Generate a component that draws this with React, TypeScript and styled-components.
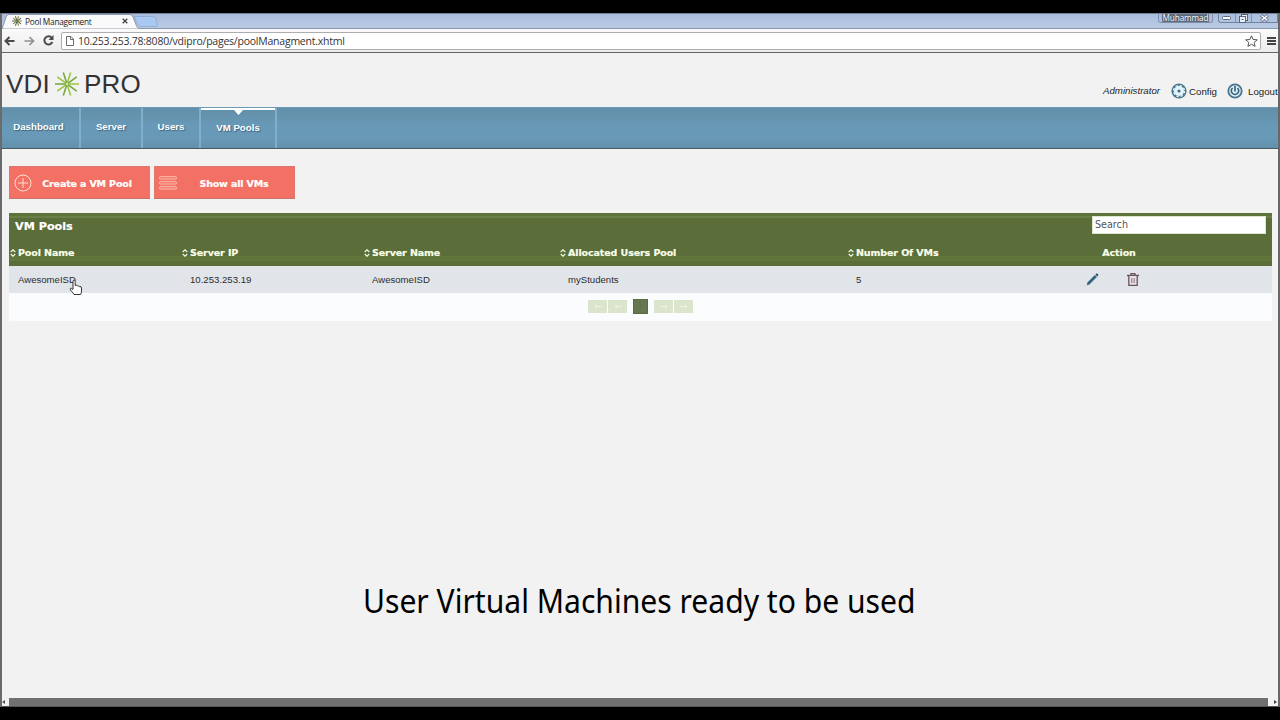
import React from 'react';
import styled, { createGlobalStyle, css } from 'styled-components';

const Global = createGlobalStyle`
  *{box-sizing:border-box}
  html,body{margin:0;padding:0;background:#000;overflow:hidden}
  body{font-family:"Liberation Sans",Arial,sans-serif}
  svg{display:block;flex:none}
`;

const Screen = styled.div`
  width:1280px;height:720px;padding:13px 0;background:#000;
`;
const Window = styled.div`
  height:694px;border-left:2px solid #6b6b6e;border-right:2px solid #68686b;
  background:#f2f2f2;display:flex;flex-direction:column;
`;
const TabStrip = styled.div`
  height:16px;flex:none;display:flex;align-items:flex-start;border-top:1px solid #73809a;
  border-bottom:1px solid #8b97ac;background:linear-gradient(#a9bddb,#bacbe4);
`;
const TabShapes = styled.div`
  width:158px;height:15px;position:relative;
`;
const TabArt = styled.svg`
  position:absolute;left:0;top:0;
`;
const TabLabel = styled.div`
  position:relative;display:flex;align-items:center;height:14px;padding-left:10px;
  font:8.3px "Open Sans",sans-serif;color:#222;white-space:nowrap;
`;
const TabText = styled.span`
  margin-left:3px;width:97px;letter-spacing:-0.27px;
`;
const Spacer = styled.div`flex:1;`;
const UserBadge = styled.div`
  height:9px;width:55px;margin-right:5px;border:1px solid #7f90ad;border-top:0;border-radius:0 0 3px 3px;
  display:flex;justify-content:center;align-items:center;
`;
const UserName = styled.span`
  font:8.2px/8px "Open Sans",sans-serif;color:#fff;background:#66738a;padding:0 1px;height:8px;
  text-shadow:0 0 2px #222;letter-spacing:-.1px;
`;
const WindowButtons = styled.div`
  height:9px;width:60px;display:flex;border:1px solid #7383a0;border-top:0;border-radius:0 0 0 3px;
`;
const WindowButton = styled.div<{ $w: number }>`
  width:${p => p.$w}px;display:flex;justify-content:center;align-items:center;
  & + &{border-left:1px solid #8292af}
`;

const Toolbar = styled.div`
  height:24px;flex:none;display:flex;align-items:center;background:linear-gradient(#fafafa,#ececec);
  border-bottom:1px solid #666;padding-left:2px;
`;
const NavIcon = styled.div<{ $w: number }>`
  width:${p => p.$w}px;flex:none;display:flex;
`;
const Omnibox = styled.div`
  width:1200px;height:18px;flex:none;border:1px solid #adadad;border-radius:2px;background:#fff;
  display:flex;align-items:center;padding:0 2px 0 4px;
`;
const Address = styled.span`
  margin-left:4px;flex:1;font:10.5px/16px "Open Sans",sans-serif;color:#333;letter-spacing:-0.23px;
`;
const Menu = styled.div`
  width:9px;flex:none;margin-left:6px;display:flex;flex-direction:column;gap:1px;
`;
const MenuBar = styled.i`height:2px;background:#444;`;

const Header = styled.header`
  height:54px;flex:none;display:flex;align-items:flex-start;justify-content:space-between;
`;
const Logo = styled.div`
  display:flex;align-items:center;gap:5px;padding:15px 0 0 4px;height:46px;color:#333;
`;
const LogoText = styled.span<{ $s?: number }>`
  font:26px/30px "Liberation Sans",Arial,sans-serif;letter-spacing:${p => p.$s || 0}px;
`;
const Account = styled.div`
  display:flex;align-items:center;padding-top:28px;height:48px;width:175px;
  font-size:9.7px;color:#222;white-space:nowrap;
`;
const AccountText = styled.span<{ $w: number; $italic?: boolean }>`
  width:${p => p.$w}px;flex:none;
  ${p => p.$italic && css`font-style:italic;padding-bottom:1px;`}
`;
const AccountIcon = styled.div<{ $gap: number }>`margin-right:${p => p.$gap}px;`;

const Nav = styled.nav`
  height:42px;flex:none;display:flex;background:linear-gradient(#628fa9,#6899b7 45%,#6899b7 75%,#6291ab);
  border-top:1px solid #6b9bb6;border-bottom:1px solid #4b5a64;
`;
const NavItem = styled.div<{ $w: number; $active?: boolean; $shift?: number }>`
  position:relative;width:${p => p.$w}px;border-right:2px solid #7fb0cb;display:flex;justify-content:center;
  padding-top:${p => (p.$active ? 13 : 12)}px;padding-right:${p => p.$shift || 0}px;
  font:bold 9.7px/14px "Liberation Sans",Arial,sans-serif;color:#fff;text-shadow:1px 1px 1px #3c6279;
`;
const ActiveMark = styled.svg`
  position:absolute;left:0;top:0;
`;

const Content = styled.main`
  flex:1;min-height:0;padding:17px 6px 0 7px;display:flex;flex-direction:column;
`;
const Actions = styled.div`display:flex;gap:4px;height:33px;`;
const ActionButton = styled.div`
  width:141px;height:33px;border:1px solid #dc786e;border-bottom-color:#c4756b;background:#f37164;
  display:flex;align-items:center;padding-left:4px;
`;
const ActionLabel = styled.span<{ $pad: number }>`
  flex:1;text-align:center;padding:2px ${p => p.$pad}px 0 0;font:bold 9.5px/14px "DejaVu Sans",Verdana,sans-serif;
  letter-spacing:-.15px;color:#fff;white-space:nowrap;-webkit-text-stroke:.2px #fff;
`;
const Panel = styled.section`
  margin:14px 0 0;width:1263px;
`;
const PanelTop = styled.div`
  height:27px;background:linear-gradient(#5d733a 0,#5d733a 3px,#687f47 3px,#687f47 5px,#5b6d39 5px);
  display:flex;justify-content:space-between;padding:3px 6px 0;
`;
const PanelTitle = styled.h2`
  margin:0;padding-top:3px;font:bold 11.2px/16px "DejaVu Sans",Verdana,sans-serif;color:#fff;
  -webkit-text-stroke:.2px #fff;
`;
const Search = styled.div`
  width:174px;height:18px;background:#fff;border:1px solid #dbe6cd;padding-left:2px;
  font:9.6px/16px "DejaVu Sans",Verdana,sans-serif;color:#555;
`;
const Row = styled.div`
  display:grid;grid-template-columns:172px 182px 196px 288px 119px 306px;align-items:center;
`;
const HeadRow = styled(Row)`
  height:26px;background:linear-gradient(#5b6d39 16px,#60763b 16px,#60763b 21px,#5b6d39 21px);
  font:bold 9.5px/14px "DejaVu Sans",Verdana,sans-serif;letter-spacing:-.1px;color:#f8ffe8;
  -webkit-text-stroke:.2px #f8ffe8;
`;
const HeadCell = styled.div`display:flex;align-items:center;gap:2px;padding-left:1px;white-space:nowrap;`;
const ActionHead = styled.div`text-align:center;`;
const DataRow = styled(Row)`
  height:27px;background:#e1e5ea;font-size:9.6px;color:#2c2c2c;
`;
const Cell = styled.div`padding-left:9px;`;
const RowIcons = styled.div`display:flex;align-items:center;padding-left:120px;gap:28px;`;
const Pager = styled.div`
  height:28px;background:#fbfcfe;display:flex;justify-content:center;align-items:flex-start;padding-top:7px;
`;
const PageArrow = styled.div<{ $gap: number }>`
  width:19px;height:13px;margin-right:${p => p.$gap}px;background:#dbe5ce;display:flex;align-items:center;justify-content:center;
`;
const PageCurrent = styled.div`
  width:15px;height:15px;margin:-1px 6px 0 0;background:#667850;border:1px solid #596b40;
  color:#5e7048;font:8px/12px "DejaVu Sans",sans-serif;text-align:center;
`;
const Caption = styled.div`
  margin:257px 0 0 354px;font:32px/46px "Noto Sans","Open Sans",sans-serif;color:#000;white-space:nowrap;
  transform:scaleX(.94);transform-origin:0 50%;
`;
const Scrollbar = styled.div`
  height:9px;flex:none;display:flex;align-items:stretch;justify-content:space-between;border-bottom:1px solid #555;background:#f2f2f2;
`;
const Thumb = styled.div`width:1259px;background:#707070;`;
const Cursor = styled.svg`position:absolute;left:69px;top:279px;`;

const Rays = ({ size, color = '#9ac43a', alt = '#71a63a', w = 1.5 }: { size: number; color?: string; alt?: string; w?: number }) => (
  <svg width={size} height={size} viewBox="-12 -12 24 24">
    {[0, 36, 72, 108, 144, 180, 216, 252, 288, 324].map((a, i) => (
      <line key={a} x1="0" y1="1" x2="0" y2="12" stroke={i % 2 ? color : alt} strokeWidth={w} transform={`rotate(${a + 18})`} />
    ))}
  </svg>
);
const Sort = () => (
  <svg width="6" height="8" viewBox="0 0 6 8" fill="none" stroke="#eef8dc" strokeWidth="1.2"><path d="M.7 3 3 .8 5.3 3M.7 5 3 7.2 5.3 5" /></svg>
);
const Arrow = ({ flip }: { flip?: boolean }) => (
  <svg width="8" height="5" viewBox="0 0 8 5" fill="none" stroke="#eef4e5">
    <path d={flip ? 'M0 2.500H7M5 .8 7 2.500 5 4.200' : 'M8 2.500H1M3 .8 1 2.500 3 4.200'} />
  </svg>
);

const heads = ['Pool Name', 'Server IP', 'Server Name', 'Allocated Users Pool', 'Number Of VMs'];

export default function App() {
  return (
    <Screen>
      <Global />
      <Window>
        <TabStrip>
          <TabShapes>
            <TabArt width="158" height="15" viewBox="0 0 158 15">
              <path d="M132 2.500H151Q153 2.500 154 5L155.500 11Q156 12.500 154 12.500H139Q136.500 12.500 135.500 10Z" fill="#a9c8f2" stroke="#8da6cc" strokeWidth=".8" />
              <path d="M0 15 4.500 2Q5.200.5 7 .5H128Q130 .5 131 3L134.500 12Q135.300 14 138 15Z" fill="#fafafa" stroke="#7c899f" strokeWidth=".8" />
            </TabArt>
            <TabLabel>
              <Rays size={10} color="#77813e" alt="#4e5733" w={2.2} />
              <TabText>Pool Management</TabText>
              <svg width="6" height="6" viewBox="0 0 6 6" stroke="#444" strokeWidth="1.3"><path d="M.7.7 5.300 5.300M5.300.7.7 5.300" /></svg>
            </TabLabel>
          </TabShapes>
          <Spacer />
          <UserBadge><UserName>Muhammad</UserName></UserBadge>
          <WindowButtons>
            <WindowButton $w={16}>
              <svg width="9" height="4" viewBox="0 0 9 4"><rect x=".5" y=".5" width="8" height="3" rx="1" fill="#fff" stroke="#5d6b83" /></svg>
            </WindowButton>
            <WindowButton $w={17}>
              <svg width="9" height="9" viewBox="0 0 9 9" fill="#e9eef7" stroke="#59667d"><rect x="2.500" y=".5" width="6" height="6" /><rect x=".5" y="2.500" width="6" height="6" /><path d="M2.500 5.500h2" /></svg>
            </WindowButton>
            <WindowButton $w={26}>
              <svg width="9" height="8" viewBox="0 0 9 8"><path d="M1 1 8 7M8 1 1 7" stroke="#66748d" strokeWidth="3" /><path d="M1.500 1.500 7.500 6.500M7.500 1.500 1.500 6.500" stroke="#fff" strokeWidth="1.500" /></svg>
            </WindowButton>
          </WindowButtons>
        </TabStrip>
        <Toolbar>
          <NavIcon $w={20}>
            <svg width="11" height="10" viewBox="0 0 11 10" fill="none" stroke="#4b4b4b" strokeWidth="2"><path d="M10.500 5H2M5.500 1 1.500 5l4 4" /></svg>
          </NavIcon>
          <NavIcon $w={19}>
            <svg width="11" height="10" viewBox="0 0 11 10" fill="none" stroke="#909090" strokeWidth="1.700"><path d="M.5 5H9M5.500 1 9.500 5l-4 4" /></svg>
          </NavIcon>
          <NavIcon $w={18}>
            <svg width="11" height="11" viewBox="0 0 11 11"><path d="M8.800 3A4.100 4.100 0 1 0 9.300 7" fill="none" stroke="#4b4b4b" strokeWidth="2" /><path d="M10.500 0V5H5.500Z" fill="#4b4b4b" /></svg>
          </NavIcon>
          <Omnibox>
            <svg width="8" height="10" viewBox="0 0 8 10" fill="#fff" stroke="#6a6a6a"><path d="M.5.5h4.500L7.500 3v6.500h-7ZM4.500.5V3.500h3" /></svg>
            <Address>10.253.253.78:8080/vdipro/pages/poolManagment.xhtml</Address>
            <svg width="13" height="12" viewBox="0 0 13 12" fill="#fff" stroke="#555"><path d="m6.500.8 1.600 3.700 4.200.3-3.200 2.700 1 3.900-3.600-2.100-3.600 2.100 1-3.900L.7 4.800l4.200-.3Z" /></svg>
          </Omnibox>
          <Menu><MenuBar /><MenuBar /><MenuBar /></Menu>
        </Toolbar>
        <Header>
          <Logo>
            <LogoText $s={0.2}>VDI</LogoText>
            <Rays size={24} />
            <LogoText $s={0.2}>PRO</LogoText>
          </Logo>
          <Account>
            <AccountText $w={68} $italic>Administrator</AccountText>
            <AccountIcon $gap={2}>
              <svg width="16" height="16" viewBox="0 0 16 16" fill="none"><circle cx="8" cy="8" r="7.600" fill="#4b758c" /><circle cx="8" cy="8" r="5.500" stroke="#e4f4fb" strokeWidth="1.300" strokeDasharray="2.500 1.820" /><circle cx="8" cy="8" r="5" fill="#e4f4fb" /><circle cx="8" cy="8" r="1.600" fill="#40708a" /></svg>
            </AccountIcon>
            <AccountText $w={38}>Config</AccountText>
            <AccountIcon $gap={5}>
              <svg width="16" height="16" viewBox="0 0 16 16" fill="none"><circle cx="8" cy="8" r="6.700" fill="#dceff8" stroke="#4b758c" strokeWidth="1.800" /><path d="M5.500 5a3.700 3.700 0 1 0 5 0M8 3v5.500" stroke="#315f79" strokeWidth="1.600" /></svg>
            </AccountIcon>
            <AccountText $w={30}>Logout</AccountText>
          </Account>
        </Header>
        <Nav>
          <NavItem $w={79} $shift={4}>Dashboard</NavItem>
          <NavItem $w={62}>Server</NavItem>
          <NavItem $w={58}>Users</NavItem>
          <NavItem $w={76} $active>
            <ActiveMark width="74" height="8" viewBox="0 0 74 8" fill="#fff"><path d="M0 0H74V2H42L37.500 7 33 2H0Z" /></ActiveMark>
            VM Pools
          </NavItem>
        </Nav>
        <Content>
          <Actions>
            <ActionButton>
              <svg width="18" height="18" viewBox="0 0 18 18" fill="none" stroke="#ffe0cf"><circle cx="9" cy="9" r="8" /><path d="M4 9h10M9 4v10" /></svg>
              <ActionLabel $pad={7}>Create a VM Pool</ActionLabel>
            </ActionButton>
            <ActionButton>
              <svg width="18" height="14" viewBox="0 0 18 14" fill="#f37164" stroke="#ffd5c4" strokeWidth=".8"><rect x=".5" y=".7" width="17" height="2.300" rx="1" /><rect x=".5" y="5.700" width="17" height="2.300" rx="1" /><rect x=".5" y="10.700" width="17" height="2.300" rx="1" /></svg>
              <ActionLabel $pad={3}>Show all VMs</ActionLabel>
            </ActionButton>
          </Actions>
          <Panel>
            <PanelTop>
              <PanelTitle>VM Pools</PanelTitle>
              <Search>Search</Search>
            </PanelTop>
            <HeadRow>
              {heads.map(h => <HeadCell key={h}><Sort />{h}</HeadCell>)}
              <ActionHead>Action</ActionHead>
            </HeadRow>
            <DataRow>
              <Cell>AwesomeISD</Cell>
              <Cell>10.253.253.19</Cell>
              <Cell>AwesomeISD</Cell>
              <Cell>myStudents</Cell>
              <Cell>5</Cell>
              <RowIcons>
                <svg width="13" height="13" viewBox="0 0 13 13"><path d="m.6 12.400.8-2.900L8.900 1.900l2.100 2.100L3.500 11.600Z" fill="#477993" /><path d="m9.400 1.500.9-.9q.7-.4 1.500.5t.4 1.400l-.9.9Z" fill="#284d68" /><path d="m2.200 10.500 7-7.200" stroke="#2d5872" strokeWidth="1.300" /></svg>
                <svg width="12" height="13" viewBox="0 0 12 13" fill="none" stroke="#6a555c"><path d="M0 2.500h12M4 2V.5h4V2" strokeWidth="1.300" /><path d="M1.800 3v9.300h8.400V3" fill="#eadfe4" strokeWidth="1.300" /><path d="M4.500 5v5M6 5v5M7.500 5v5" strokeWidth=".7" stroke="#8d7980" /></svg>
              </RowIcons>
            </DataRow>
            <Pager>
              <PageArrow $gap={1}><Arrow /></PageArrow>
              <PageArrow $gap={6}><Arrow /></PageArrow>
              <PageCurrent>1</PageCurrent>
              <PageArrow $gap={1}><Arrow flip /></PageArrow>
              <PageArrow $gap={0}><Arrow flip /></PageArrow>
            </Pager>
          </Panel>
          <Caption>User Virtual Machines ready to be used</Caption>
        </Content>
        <Scrollbar>
          <svg width="6" height="8" viewBox="0 0 6 8"><path d="M3 2v4L0 4Z" fill="#555" /></svg>
          <Thumb />
          <svg width="9" height="8" viewBox="0 0 9 8"><path d="M5 2v4l3-2Z" fill="#444" /></svg>
        </Scrollbar>
      </Window>
      <Cursor width="14" height="17" viewBox="0 0 14 17">
        <path d="M4 9V2.500Q4 1 5 1T6.200 2.500V6.500Q8 5.500 8.500 7 10 6.300 10.500 7.700 12.500 7 12.500 9V12Q12.500 14 11.500 15.500H5Q3.500 13 1.500 11 .7 9.700 1.700 9.200 2.800 9 4 10.500Z" fill="#fff" stroke="#333" />
      </Cursor>
    </Screen>
  );
}
